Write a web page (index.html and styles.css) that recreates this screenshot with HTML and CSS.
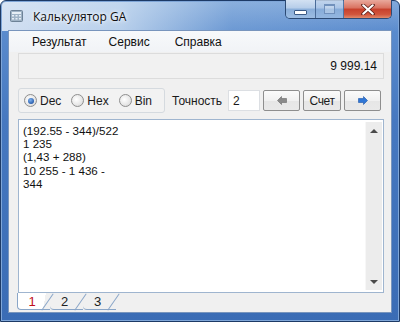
FILE: index.html
```html
<!DOCTYPE html>
<html lang="ru">
<head>
<meta charset="utf-8">
<title>Калькулятор GA</title>
<link rel="stylesheet" href="styles.css">
</head>
<body>
<div class="window">
  <div class="titlebar">
    <svg class="app-icon" width="13" height="12" viewBox="0 0 13 12">
      <rect x="0.5" y="0.5" width="12" height="11" rx="1" fill="#9fb3c6" stroke="#6d8297"/>
      <rect x="2" y="2" width="9" height="2" fill="#e6eef5"/>
      <g fill="#e6eef5">
        <rect x="2" y="5" width="2" height="1.5"/><rect x="5.5" y="5" width="2" height="1.5"/><rect x="9" y="5" width="2" height="1.5"/>
        <rect x="2" y="8" width="2" height="1.5"/><rect x="5.5" y="8" width="2" height="1.5"/><rect x="9" y="8" width="2" height="1.5"/>
      </g>
    </svg>
    <span class="title">Калькулятор GA</span>
    <div class="caption-buttons">
      <div class="cbtn cbtn-min"><span class="glyph-min"></span></div>
      <div class="cbtn cbtn-max"><span class="glyph-max"></span></div>
      <div class="cbtn cbtn-close">
        <svg width="14" height="11" viewBox="0 0 14 11"><path d="M2 1 L12 10 M12 1 L2 10" stroke="#5a1d16" stroke-width="3.6" stroke-linecap="round"/><path d="M2.3 1.3 L11.7 9.7 M11.7 1.3 L2.3 9.7" stroke="#fff" stroke-width="2.2" stroke-linecap="round"/></svg>
      </div>
    </div>
  </div>
  <div class="client">
    <div class="menubar">
      <span class="menu-item">Результат</span>
      <span class="menu-item">Сервис</span>
      <span class="menu-item">Справка</span>
    </div>
    <div class="display">9 999.14</div>
    <div class="toolbar">
      <div class="radio-group">
        <label class="radio"><span class="radio-dot checked"></span>Dec</label>
        <label class="radio"><span class="radio-dot"></span>Hex</label>
        <label class="radio"><span class="radio-dot"></span>Bin</label>
      </div>
      <span class="prec-label">Точность</span>
      <div class="prec-input">2</div>
      <div class="btn">
        <svg width="10" height="9" viewBox="0 0 10 9"><path d="M0.5 4.5 L4.5 0.5 L4.5 2.5 L9.5 2.5 L9.5 6.5 L4.5 6.5 L4.5 8.5 Z" fill="#8a8a8a" stroke="#6a6a6a" stroke-width="0.6"/></svg>
      </div>
      <div class="btn btn-text">Счет</div>
      <div class="btn">
        <svg width="10" height="9" viewBox="0 0 10 9"><path d="M9.5 4.5 L5.5 0.5 L5.5 2.5 L0.5 2.5 L0.5 6.5 L5.5 6.5 L5.5 8.5 Z" fill="#2f76d6" stroke="#1d56a8" stroke-width="0.6"/></svg>
      </div>
    </div>
    <div class="editor">
      <div class="editor-text">(192.55 - 344)/522<br>1 235<br>(1,43 + 288)<br>10 255 - 1 436 -<br>344</div>
      <div class="scrollbar">
        <div class="sb-arrow"><span class="tri-up"></span></div>
        <div class="sb-track"></div>
        <div class="sb-arrow"><span class="tri-down"></span></div>
      </div>
    </div>
    <div class="tabs">
      <div class="tab active">1</div>
      <div class="tab">2</div>
      <div class="tab">3</div>
    </div>
  </div>
</div>
</body>
</html>
```
FILE: styles.css
```css
html, body {
  margin: 0;
  padding: 0;
  background: #ffffff;
}
body {
  width: 400px;
  height: 322px;
  overflow: hidden;
  font-family: "Liberation Sans", Arial, sans-serif;
  font-size: 12px;
  color: #1a1a1a;
}
.window {
  box-sizing: border-box;
  width: 400px;
  height: 322px;
  display: flex;
  flex-direction: column;
  padding: 0 7px 8px 7px;
  border: 1px solid #1d3a66;
  border-radius: 6px 6px 0 0;
  background:
    linear-gradient(90deg, rgba(230,238,248,0.85) 0%, rgba(215,230,245,0.75) 30%, rgba(150,185,225,0.3) 58%, rgba(100,145,210,0.1) 100%) top left / 100% 30px no-repeat,
    linear-gradient(180deg, #86acdc 0px, #5a8bcd 30px, #4678c0 120px, #3a6cb5 100%);
  box-shadow: inset 0 0 0 1px #7fa6d8;
}
.titlebar {
  height: 29px;
  display: flex;
  align-items: flex-start;
}
.app-icon {
  margin: 9px 0 0 2px;
  flex: none;
}
.title {
  margin: 7px 0 0 10px;
  font-family: "Open Sans", "Liberation Sans", sans-serif;
  font-size: 12px;
  color: #0e0e0e;
  text-shadow: 0 0 6px #ffffff, 0 0 3px #ffffff;
}
.caption-buttons {
  margin-left: auto;
  display: flex;
  height: 19px;
  margin-top: -1px;
  border: 1px solid #2c4a74;
  border-top: none;
  border-radius: 0 0 5px 5px;
  overflow: hidden;
  box-sizing: border-box;
}
.cbtn {
  height: 18px;
  display: flex;
  align-items: center;
  justify-content: center;
  box-sizing: border-box;
}
.cbtn-min, .cbtn-max {
  width: 28px;
  background: linear-gradient(180deg, #d2e1f2 0%, #b6cde9 45%, #8aaed9 50%, #9dbde3 100%);
  border-right: 1px solid #4a6b98;
}
.cbtn-min { width: 30px; }
.cbtn-max { opacity: 0.8; }
.cbtn-close {
  width: 47px;
  background: linear-gradient(180deg, #e9a99c 0%, #d9715f 45%, #c7402c 50%, #d1553c 80%, #e08a6c 100%);
}
.glyph-min {
  width: 11px;
  height: 3px;
  margin-top: 6px;
  background: #ffffff;
  border: 1px solid #3c5b86;
  border-radius: 1px;
}
.glyph-max {
  width: 9px;
  height: 7px;
  border: 1px solid #6d8bb4;
  border-top-width: 2px;
  background: rgba(255,255,255,0.35);
}
.client {
  flex: 1;
  display: flex;
  flex-direction: column;
  background: #f0f0f0;
  border: 1px solid #7895bd;
}
.menubar {
  height: 21px;
  display: flex;
  align-items: center;
  padding-left: 23px;
  gap: 22px;
  background: linear-gradient(180deg, #f7f9fb, #f1f3f6);
}
.menu-item {
  color: #111;
}
.menu-item:nth-child(3) { margin-left: 3px; }
.display {
  margin: 1px 7px 0 9px;
  height: 26px;
  box-sizing: border-box;
  border: 1px solid #dcdcdc;
  background: #f1f1f1;
  display: flex;
  align-items: center;
  justify-content: flex-end;
  padding-right: 6px;
  color: #111;
}
.toolbar {
  margin: 9px 7px 0 9px;
  height: 25px;
  display: flex;
  align-items: center;
}
.radio-group {
  width: 147px;
  height: 25px;
  box-sizing: border-box;
  border: 1px solid #d5dadf;
  border-radius: 3px;
  display: flex;
  align-items: center;
  padding-left: 5px;
  gap: 10px;
  background: #f2f2f2;
}
.radio {
  display: flex;
  align-items: center;
  gap: 3px;
}
.radio-dot {
  width: 11px;
  height: 11px;
  border-radius: 50%;
  border: 1px solid #8f8f8f;
  background: radial-gradient(circle at 40% 40%, #ffffff 0%, #e6e6e6 60%, #cfcfcf 100%);
  display: flex;
  align-items: center;
  justify-content: center;
}
.radio-dot.checked::after {
  content: "";
  width: 6px;
  height: 6px;
  border-radius: 50%;
  background: radial-gradient(circle at 40% 35%, #7fb2ef 0%, #2a5fae 70%, #1b3f7c 100%);
}
.prec-label {
  margin-left: 7px;
}
.prec-input {
  margin-left: 6px;
  width: 32px;
  height: 21px;
  box-sizing: border-box;
  border: 1px solid #dcdfe3;
  background: #ffffff;
  padding-left: 4px;
  display: flex;
  align-items: center;
}
.btn {
  width: 37px;
  height: 21px;
  box-sizing: border-box;
  border: 1px solid #8e8e8e;
  border-radius: 2px;
  background: linear-gradient(180deg, #fbfbfb 0%, #f1f1f1 50%, #e6e6e6 51%, #e9e9e9 100%);
  display: flex;
  align-items: center;
  justify-content: center;
  margin-left: 3px;
}
.btn:nth-of-type(1) { margin-left: 8px; }
.btn-text {
  width: 38px;
  letter-spacing: -0.3px;
}
.editor {
  margin: 6px 7px 0 9px;
  height: 174px;
  box-sizing: border-box;
  border: 1px solid #9fb5cf;
  background: #ffffff;
  display: flex;
}
.editor-text {
  flex: 1;
  padding: 4px 0 0 4px;
  font-size: 11.6px;
  line-height: 13.2px;
  color: #111;
}
.scrollbar {
  width: 16px;
  margin: 2px 1px 2px 0;
  display: flex;
  flex-direction: column;
  background: #ececec;
  border-left: 1px solid #f7f7f7;
}
.sb-arrow {
  height: 17px;
  display: flex;
  align-items: center;
  justify-content: center;
}
.sb-track { flex: 1; }
.tri-up {
  width: 0; height: 0;
  border-left: 4px solid transparent;
  border-right: 4px solid transparent;
  border-bottom: 4px solid #4a4a4a;
}
.tri-down {
  width: 0; height: 0;
  border-left: 4px solid transparent;
  border-right: 4px solid transparent;
  border-top: 4px solid #4a4a4a;
}
.tabs {
  height: 17px;
  display: flex;
  padding-left: 8px;
}
.tab {
  position: relative;
  width: 33px;
  height: 17px;
  box-sizing: border-box;
  display: flex;
  align-items: center;
  justify-content: center;
  padding-right: 4px;
  border-bottom: 1px solid #8aa6c8;
  border-radius: 0 0 0 4px;
  font-size: 13px;
  color: #222;
}
.tab::after {
  content: "";
  position: absolute;
  right: 2px;
  top: -1px;
  width: 1px;
  height: 20px;
  background: #8aa6c8;
  transform: rotate(35deg);
  transform-origin: center;
}
.tab.active {
  border-left: 1px solid #8aa6c8;
  background: linear-gradient(100deg, #ffffff 0 80%, transparent 80%);
  color: #c0101a;
}
```
